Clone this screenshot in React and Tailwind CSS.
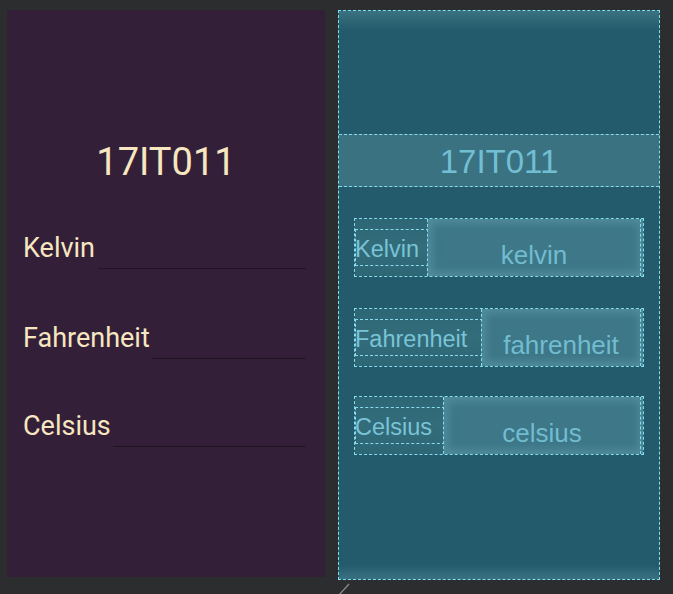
const rows = [
  { label: 'Kelvin', hint: 'kelvin', labelW: 'w-[74px]', editMl: 'ml-[1px]', bpLabel: 'w-[74px]' },
  { label: 'Fahrenheit', hint: 'fahrenheit', labelW: 'w-[129px]', editMl: 'ml-0', bpLabel: 'w-[128px]' },
  { label: 'Celsius', hint: 'celsius', labelW: 'w-[90px]', editMl: 'ml-0', bpLabel: 'w-[90px]' },
]

const gaps = ['mt-[31px]', 'mt-[31px]', 'mt-[29px]']

function DesignRow({ row, gap }) {
  return (
    <div className={`${gap} mx-[16px] h-[59px] flex`}>
      <div className={`${row.labelW} shrink-0 flex items-center text-[27px] leading-none text-[#f6e7c1]`}>
        <span className="mt-[4px]">{row.label}</span>
      </div>
      <div className={`${row.editMl} flex-1 flex items-end pb-[7px] pr-[3px]`}>
        <div className="h-px w-full bg-[#1f1522]" />
      </div>
    </div>
  )
}

function BlueprintRow({ row, gap }) {
  return (
    <div className={`${gap} mx-[15px] h-[59px] flex relative border border-dashed border-[#86dcec]`}>
      <div className={`${row.bpLabel} shrink-0 bg-gradient-to-b from-[#2d6675] via-[#336c7b] to-[#2d6675] flex items-center`}>
        <div className="w-full h-[37px] border border-dashed border-[#86dcec] flex items-center text-[23.5px] leading-none text-[#79c4d6]">
          <span className="-ml-[1px] mt-[4px]">{row.label}</span>
        </div>
      </div>
      <div className="flex-1 -ml-[2px] border-l border-dashed border-[#86dcec] bg-[#3d7788] shadow-[inset_0_0_8px_4px_rgba(95,155,170,0.6)] flex items-center justify-center pr-[3px] relative">
        <span className="mt-[14px] text-[26px] leading-none text-[#72bcd0]">{row.hint}</span>
        <div className="absolute right-[2px] top-0 bottom-0 border-r border-dashed border-[#86dcec]" />
      </div>
    </div>
  )
}

export default function App() {
  return (
    <div className="w-[673px] h-[594px] bg-[#2c2d2f] flex items-start pl-[7px] pt-[10px] gap-[13px] overflow-hidden relative" style={{ fontFamily: 'Roboto, sans-serif' }}>
      {/* design view */}
      <div className="w-[318px] h-[567px] bg-[#341f38] flex flex-col">
        <div className="h-[124px]" />
        <div className="h-[52px] flex items-center justify-center text-[38px] leading-none text-[#f6e7c1]">
          <span className="mt-[4px]">17IT011</span>
        </div>
        {rows.map((r, i) => (
          <DesignRow key={r.label} row={r} gap={gaps[i]} />
        ))}
      </div>

      {/* blueprint view */}
      <div className="w-[322px] h-[570px] bg-[#235b6c] border border-dashed border-[#86dcec] flex flex-col relative" style={{ fontFamily: '"Liberation Sans", Arial, sans-serif' }}>
        <div className="h-[123px] bg-gradient-to-b from-[#3a7282] from-[0%] via-[#2b6373] via-[10%] to-[#235b6c] to-[16%]" />
        <div className="h-[53px] bg-[#3a7282] border-y border-dashed border-[#86dcec] flex items-center justify-center text-[33px] leading-none text-[#72bfd3]">
          <span className="mt-[2px]">17IT011</span>
        </div>
        {rows.map((r, i) => (
          <BlueprintRow key={r.label} row={r} gap={gaps[i]} />
        ))}
        <div className="flex-1" />
        <div className="h-[14px] bg-gradient-to-b from-[#235b6c] to-[#3a7282]" />
      </div>

      <svg className="absolute left-[338px] top-[582px]" width="16" height="14" viewBox="0 0 16 14">
        <line x1="1" y1="13" x2="11" y2="2" stroke="#8a8a8a" strokeWidth="1.3" />
      </svg>
    </div>
  )
}
